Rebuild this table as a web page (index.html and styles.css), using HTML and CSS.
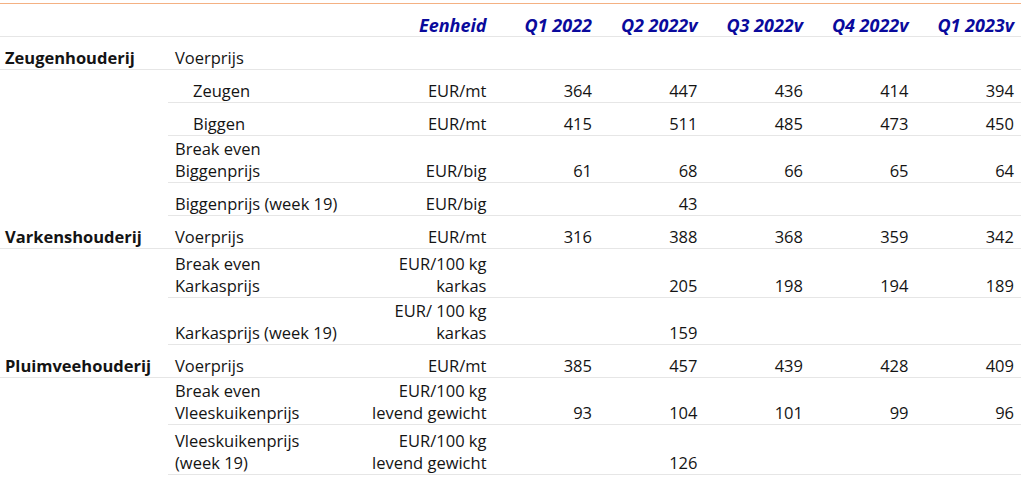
FILE: index.html
```html
<!DOCTYPE html>
<html lang="nl">
<head>
<meta charset="utf-8">
<title>Voerprijzen en break-even prijzen</title>
<link rel="stylesheet" href="styles.css">
</head>
<body>
<table class="prices">
  <colgroup>
    <col class="c-cat">
    <col class="c-label">
    <col class="c-unit">
    <col class="c-num">
    <col class="c-num">
    <col class="c-num">
    <col class="c-num">
    <col class="c-num">
  </colgroup>
  <thead>
    <tr class="head">
      <th class="cat"></th>
      <th class="label"></th>
      <th class="unit">Eenheid</th>
      <th class="num">Q1 2022</th>
      <th class="num">Q2 2022v</th>
      <th class="num">Q3 2022v</th>
      <th class="num">Q4 2022v</th>
      <th class="num">Q1 2023v</th>
    </tr>
  </thead>
  <tbody>
    <tr class="single">
      <td class="cat first">Zeugenhouderij</td>
      <td class="label">Voerprijs</td>
      <td class="unit"></td>
      <td class="num"></td><td class="num"></td><td class="num"></td><td class="num"></td><td class="num"></td>
    </tr>
    <tr class="single">
      <td class="cat"></td>
      <td class="label indent">Zeugen</td>
      <td class="unit">EUR/mt</td>
      <td class="num">364</td><td class="num">447</td><td class="num">436</td><td class="num">414</td><td class="num">394</td>
    </tr>
    <tr class="single">
      <td class="cat"></td>
      <td class="label indent">Biggen</td>
      <td class="unit">EUR/mt</td>
      <td class="num">415</td><td class="num">511</td><td class="num">485</td><td class="num">473</td><td class="num">450</td>
    </tr>
    <tr class="double">
      <td class="cat"></td>
      <td class="label">Break even<br>Biggenprijs</td>
      <td class="unit">EUR/big</td>
      <td class="num">61</td><td class="num">68</td><td class="num">66</td><td class="num">65</td><td class="num">64</td>
    </tr>
    <tr class="single">
      <td class="cat"></td>
      <td class="label">Biggenprijs (week 19)</td>
      <td class="unit">EUR/big</td>
      <td class="num"></td><td class="num">43</td><td class="num"></td><td class="num"></td><td class="num"></td>
    </tr>
    <tr class="single">
      <td class="cat first">Varkenshouderij</td>
      <td class="label">Voerprijs</td>
      <td class="unit">EUR/mt</td>
      <td class="num">316</td><td class="num">388</td><td class="num">368</td><td class="num">359</td><td class="num">342</td>
    </tr>
    <tr class="double tall">
      <td class="cat"></td>
      <td class="label">Break even<br>Karkasprijs</td>
      <td class="unit">EUR/100 kg<br>karkas</td>
      <td class="num"></td><td class="num">205</td><td class="num">198</td><td class="num">194</td><td class="num">189</td>
    </tr>
    <tr class="double">
      <td class="cat"></td>
      <td class="label">Karkasprijs (week 19)</td>
      <td class="unit">EUR/ 100 kg<br>karkas</td>
      <td class="num"></td><td class="num">159</td><td class="num"></td><td class="num"></td><td class="num"></td>
    </tr>
    <tr class="single">
      <td class="cat first">Pluimveehouderij</td>
      <td class="label">Voerprijs</td>
      <td class="unit">EUR/mt</td>
      <td class="num">385</td><td class="num">457</td><td class="num">439</td><td class="num">428</td><td class="num">409</td>
    </tr>
    <tr class="double">
      <td class="cat"></td>
      <td class="label">Break even<br>Vleeskuikenprijs</td>
      <td class="unit">EUR/100 kg<br>levend gewicht</td>
      <td class="num">93</td><td class="num">104</td><td class="num">101</td><td class="num">99</td><td class="num">96</td>
    </tr>
    <tr class="double taller">
      <td class="cat"></td>
      <td class="label">Vleeskuikenprijs<br>(week 19)</td>
      <td class="unit">EUR/100 kg<br>levend gewicht</td>
      <td class="num"></td><td class="num">126</td><td class="num"></td><td class="num"></td><td class="num"></td>
    </tr>
  </tbody>
</table>
</body>
</html>
```

FILE: styles.css
```css
html, body {
  margin: 0;
  padding: 0;
  background: #ffffff;
}

body {
  font-family: "Open Sans", "Noto Sans", sans-serif;
  font-size: 16.5px;
  color: #141414;
}

.prices {
  margin-top: 3px;
  width: 1021px;
  table-layout: fixed;
  border-collapse: collapse;
  border-top: 1px solid #f4b183;
}

.c-cat { width: 168px; }
.c-label { width: 197px; }
.c-unit { width: 128.5px; }
.c-num { width: 105.5px; }

.prices th,
.prices td {
  padding: 2px 7px 0 7px;
  line-height: 22px;
  vertical-align: bottom;
  border-bottom: 1px solid #e6e6e6;
  white-space: nowrap;
}

.prices td.cat {
  border-bottom: none;
  padding-left: 5px;
  font-weight: 700;
}

.prices td.cat.first {
  border-bottom: 1px solid #e6e6e6;
}

.prices th {
  font-weight: 700;
  font-style: italic;
  color: #0a0a9c;
  text-align: right;
  font-size: 18px;
}

.head { height: 33px; }
.single { height: 33px; }
.double { height: 47px; }
.double.tall { height: 49px; }
.double.taller { height: 50px; }

.label { text-align: left; }
.label.indent { padding-left: 25px; }
.unit { text-align: right; }
.num { text-align: right; }
```
